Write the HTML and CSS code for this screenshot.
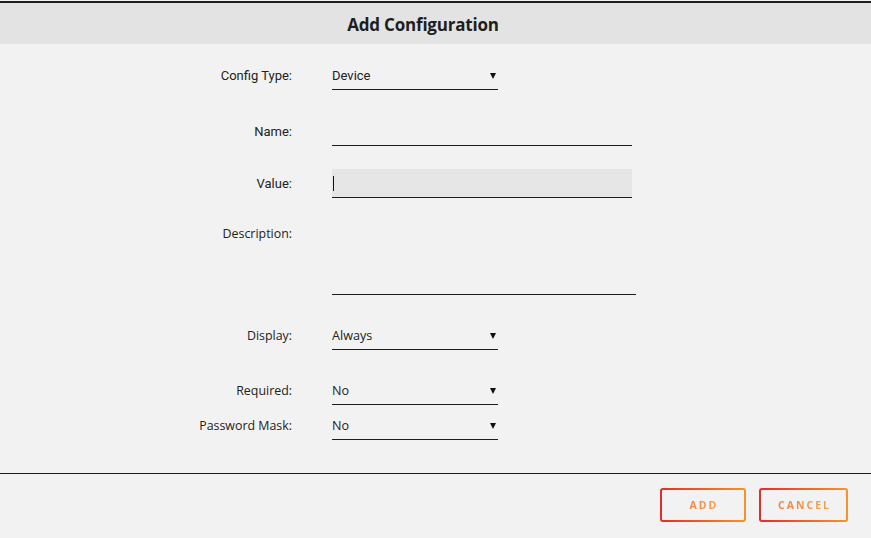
FILE: index.html
```html
<!DOCTYPE html>
<html lang="en">
<head>
  <meta charset="UTF-8">
  <meta name="viewport" content="width=device-width, initial-scale=1.0">
  <title>Add Configuration</title>
  <link rel="stylesheet" href="styles.css">
</head>
<body>
  <div class="dialog">
    <div class="dialog-header">
      <h2>Add Configuration</h2>
    </div>

    <div class="dialog-body">
      <div class="row row-config">
        <label class="roboto">Config Type:</label>
        <div class="select-wrap">
          <select class="roboto">
            <option>Device</option>
          </select>
        </div>
      </div>

      <div class="row row-name">
        <label class="roboto">Name:</label>
        <input type="text" class="text-input">
      </div>

      <div class="row row-value">
        <label class="roboto">Value:</label>
        <div class="focus-wrap">
          <input type="text" class="text-input value-input">
        </div>
      </div>

      <div class="row row-desc">
        <label>Description:</label>
        <textarea class="desc-input"></textarea>
      </div>

      <div class="row row-display">
        <label>Display:</label>
        <div class="select-wrap">
          <select>
            <option>Always</option>
          </select>
        </div>
      </div>

      <div class="row row-required">
        <label>Required:</label>
        <div class="select-wrap">
          <select>
            <option>No</option>
          </select>
        </div>
      </div>

      <div class="row row-mask">
        <label>Password Mask:</label>
        <div class="select-wrap">
          <select>
            <option>No</option>
          </select>
        </div>
      </div>
    </div>

    <div class="dialog-footer">
      <button class="grad-btn add-btn"><span>ADD</span></button>
      <button class="grad-btn cancel-btn"><span>CANCEL</span></button>
    </div>
  </div>
</body>
</html>
```

FILE: styles.css
```css
body {
  margin: 0;
  background-color: #f2f2f2;
  font-family: "Open Sans", "Noto Sans", sans-serif;
  color: #222;
}
.dialog {
  padding-top: 1px;
}
.dialog-header {
  border-top: 2px solid #1e1e1e;
  background-color: #e3e3e3;
  padding: 1px 25px 0 0;
  height: 40px;
  display: flex;
  align-items: center;
  justify-content: center;
}
h2 {
  margin: 0;
  font-size: 17px;
  font-weight: 700;
  color: #1e1e1e;
  letter-spacing: -0.2px;
}
.dialog-body {
  padding-top: 17px;
  padding-bottom: 33px;
  border-bottom: 1px solid #1e1e1e;
}
.row {
  display: grid;
  grid-template-columns: 292px auto;
  column-gap: 40px;
  align-items: center;
}
label {
  font-size: 12.4px;
  text-align: right;
  color: #222;
}
.roboto {
  font-family: Roboto, sans-serif;
}
label.roboto {
  font-size: 13px;
}
.select-wrap {
  position: relative;
  width: 166px;
}
.select-wrap::after {
  content: "";
  position: absolute;
  right: 2px;
  top: 12px;
  border-left: 3px solid transparent;
  border-right: 3px solid transparent;
  border-top: 6px solid #111;
}
select {
  appearance: none;
  -webkit-appearance: none;
  width: 100%;
  height: 29px;
  margin: 0;
  padding: 0;
  border: none;
  border-bottom: 1px solid #1e1e1e;
  border-radius: 0;
  background: transparent;
  font-family: "Open Sans", "Noto Sans", sans-serif;
  font-size: 12.6px;
  color: #222;
}
select.roboto {
  font-family: Roboto, sans-serif;
  font-size: 13px;
}
.text-input {
  width: 300px;
  height: 29px;
  box-sizing: border-box;
  margin: 0;
  padding: 0 2px;
  border: none;
  border-bottom: 1px solid #1e1e1e;
  background: transparent;
  font-size: 13px;
  outline: none;
}
.value-input {
  background-color: #e6e6e6;
}
.focus-wrap {
  position: relative;
  width: 300px;
}
.focus-wrap::before {
  content: "";
  position: absolute;
  left: 1px;
  top: 7px;
  width: 1px;
  height: 15px;
  background-color: #111;
}
.desc-input {
  width: 304px;
  height: 69px;
  box-sizing: border-box;
  margin: 0;
  padding: 0;
  border: none;
  border-bottom: 1px solid #1e1e1e;
  background: transparent;
  resize: none;
  outline: none;
}
.row-name {
  margin-top: 27px;
}
.row-value {
  margin-top: 23px;
}
.row-desc {
  margin-top: 28px;
  align-items: start;
}
.row-desc label {
  line-height: 16px;
}
.row-display {
  margin-top: 26px;
}
.row-required {
  margin-top: 26px;
}
.row-mask {
  margin-top: 6px;
}
.dialog-footer {
  display: flex;
  justify-content: flex-end;
  gap: 13px;
  padding: 14px 23px 0 0;
}
.grad-btn {
  height: 34px;
  padding: 0;
  border: 2px solid transparent;
  border-radius: 3px;
  background: linear-gradient(#f2f2f2, #f2f2f2) padding-box,
    linear-gradient(to right, #e42b2b, #f7932d) border-box;
  font-family: "Open Sans", "Noto Sans", sans-serif;
  font-size: 10.5px;
  font-weight: 700;
  letter-spacing: 2px;
  line-height: 14px;
  cursor: pointer;
}
.grad-btn span {
  display: inline-block;
  padding-left: 2px;
  background: linear-gradient(to right, #f57f3c, #f7a04a);
  -webkit-background-clip: text;
  background-clip: text;
  color: transparent;
}
.add-btn {
  width: 86px;
}
.cancel-btn {
  width: 89px;
}
```
